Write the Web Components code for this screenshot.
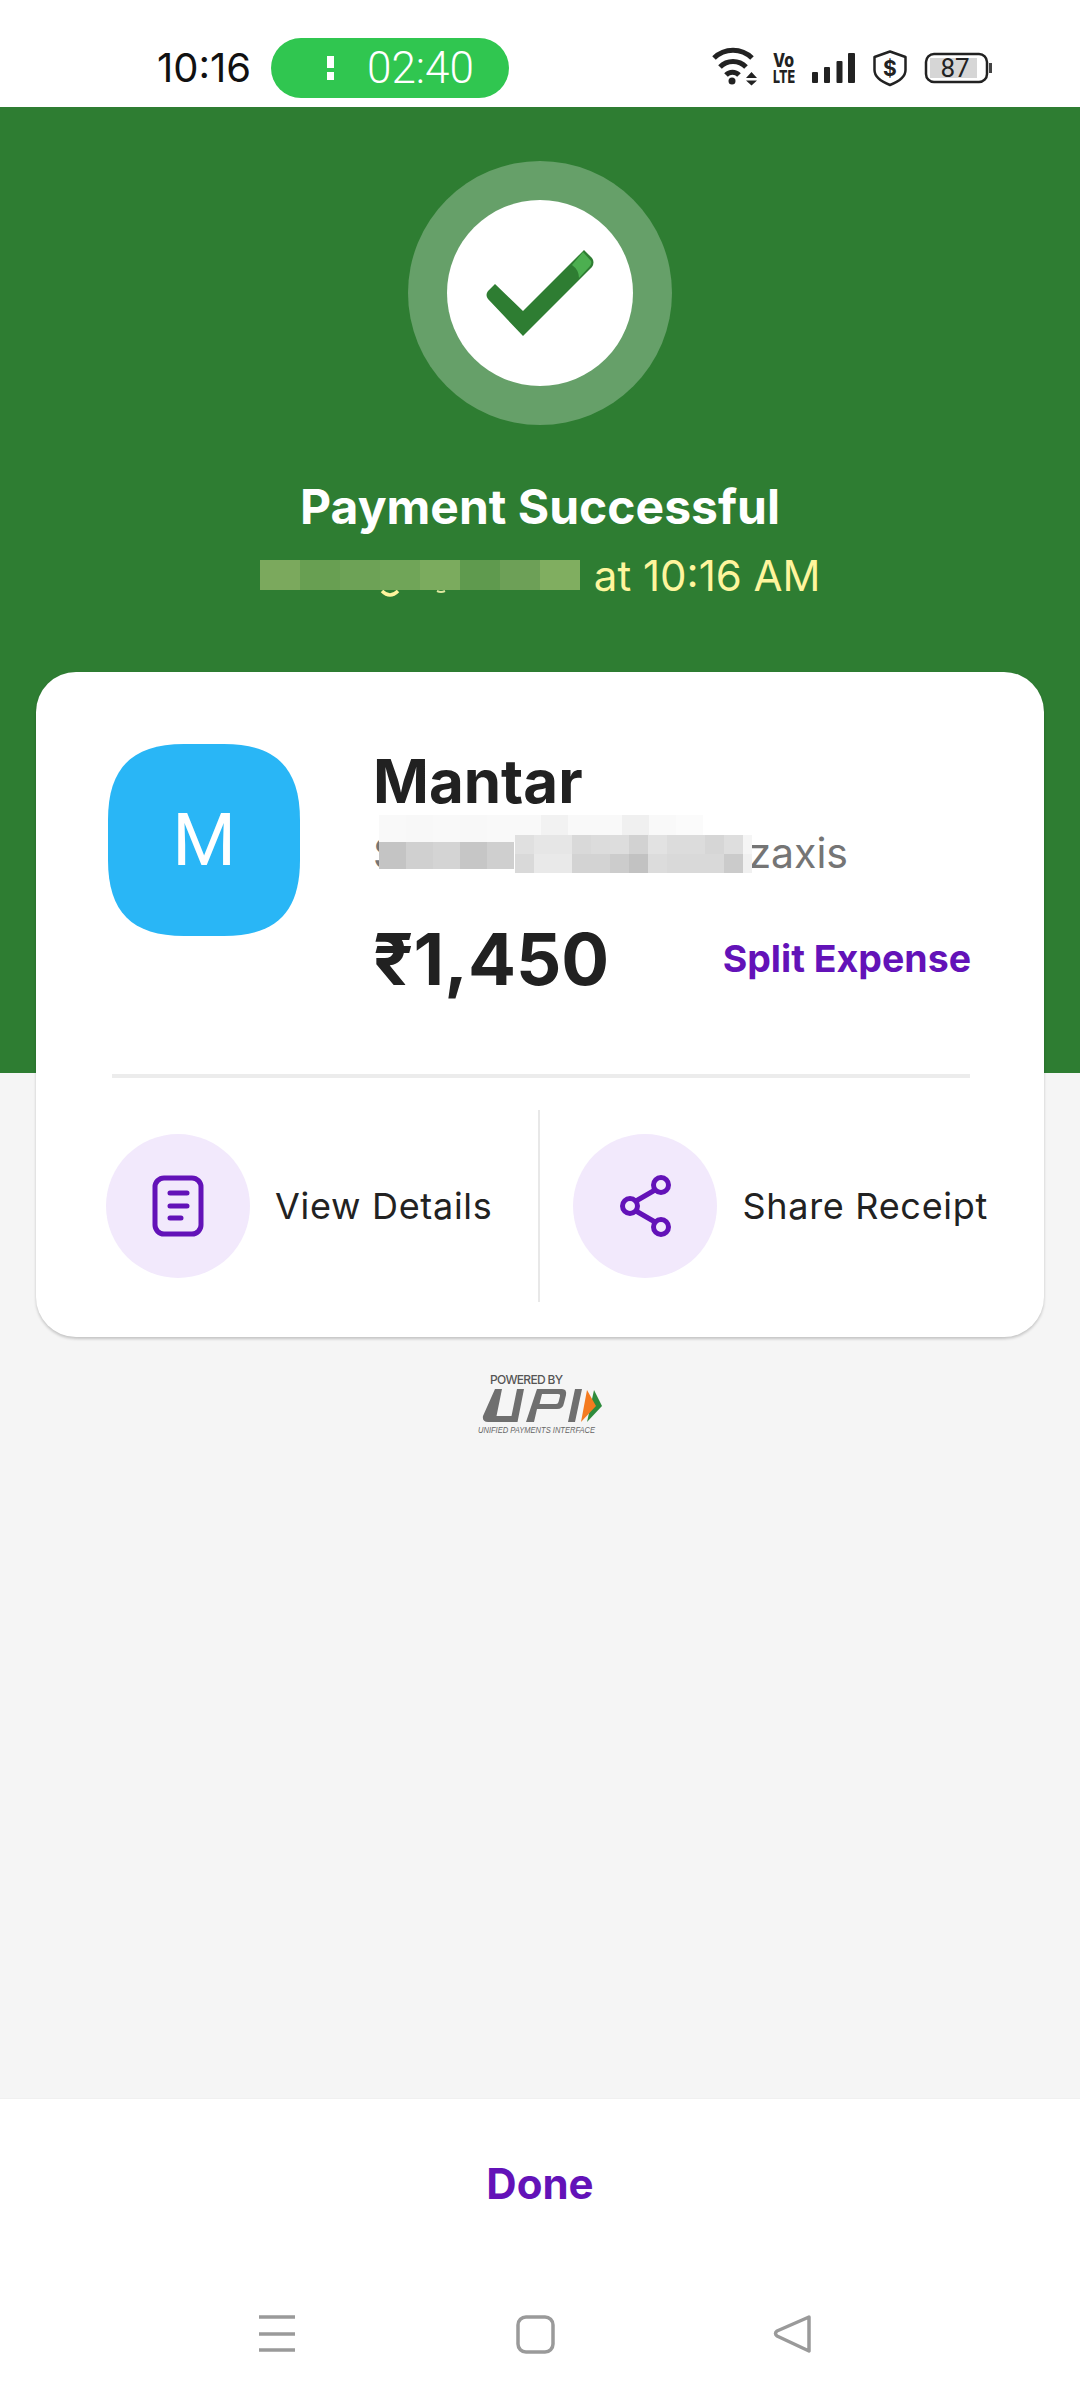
<!DOCTYPE html>
<html>
<head>
<meta charset="utf-8">
<style>
html, body { margin: 0; padding: 0; background: #f5f5f5; }
body { font-family: Inter, "Noto Sans", sans-serif; }
</style>
</head>
<body>
<payment-screen>
	<status-bar></status-bar>
	<payment-hero></payment-hero>
	<receipt-card></receipt-card>
	<upi-logo></upi-logo>
	<done-bar></done-bar>
	<nav-bar></nav-bar>
</payment-screen>
<script>
const define = (name, html) => {
	const template = document.createElement('template');
	template.innerHTML = html;
	customElements.define(name, class extends HTMLElement {
		connectedCallback() {
			if (this.shadowRoot) {
				return;
			}
			this.attachShadow({ mode: 'open' }).appendChild(template.content.cloneNode(true));
		}
	});
};

// blurred-out patch: rows split by |, cells by spaces
class PixelMosaic extends HTMLElement {
	connectedCallback() {
		if (this.shadowRoot) {
			return;
		}
		const cellWidth = this.getAttribute('cell-width');
		const cellHeight = this.getAttribute('cell-height');
		const rows = this.getAttribute('rows').split('|').map((row) => {
			const cells = row.trim().split(' ').map((c) => `<b style="background:#${c}"></b>`).join('');
			return `<div>${cells}</div>`;
		}).join('');
		this.attachShadow({ mode: 'open' }).innerHTML = `
<style>
:host { display: block; position: absolute; overflow: hidden; }
div { display: flex; height: ${cellHeight}px; }
b { display: block; flex: none; width: ${cellWidth}px; }
</style>
${rows}`;
	}
}
customElements.define('pixel-mosaic', PixelMosaic);

define('payment-screen', `
<style>
:host { display: flex; flex-direction: column; width: 1080px; height: 2400px; background: #f5f5f5; overflow: hidden; }
</style>
<slot></slot>
`);

define('status-bar', `
<style>
:host { display: flex; align-items: center; height: 107px; background: #fff; box-sizing: border-box; padding: 28px 0 0 157px; flex: none; }
.time { font: 400 40px Inter, sans-serif; color: #111; width: 114px; }
.call { display: flex; align-items: center; width: 238px; height: 60px; border-radius: 30px; background: #30c650; color: #fff; font: 300 44px Roboto, sans-serif; box-sizing: border-box; padding-left: 56px; }
.call i { display: block; width: 7px; height: 24px; margin-right: 33px; background: linear-gradient(#fff 0 12px, transparent 12px 16px, #fff 16px); }
svg { display: block; margin-left: 191px; }
</style>
<span class="time">10:16</span>
<span class="call"><i></i>02:40</span>
<svg width="300" height="55" viewBox="0 0 300 55">
	<g fill="none" stroke="#222" stroke-width="5">
		<path d="M14 18 A27 27 0 0 1 52 18"/>
		<path d="M20 27 A18 18 0 0 1 46 27"/>
		<path d="M26 35 A9 9 0 0 1 39 35"/>
	</g>
	<circle cx="32" cy="41" r="3.500" fill="#222"/>
	<path d="M46 38h11l-5.500 -6zM46 40.500h11l-5.500 5z" fill="#222"/>
	<text font-family="Inter, sans-serif" font-weight="800" fill="#222"><tspan x="73" y="27" font-size="19" textLength="21" lengthAdjust="spacingAndGlyphs">Vo</tspan><tspan x="73" y="43" font-size="18" textLength="22" lengthAdjust="spacingAndGlyphs">LTE</tspan></text>
	<g fill="#222">
		<rect x="112" y="32" width="6" height="11" rx="1"/>
		<rect x="124" y="27" width="6" height="16" rx="1"/>
		<rect x="136.500" y="21" width="6" height="22" rx="1"/>
		<rect x="148" y="13" width="7" height="30" rx="1"/>
	</g>
	<path d="M190 11.500 L205.500 17 V30 C205.500 37 199 41.500 190 45 C181 41.500 174.500 37 174.500 30 V17 Z" fill="none" stroke="#222" stroke-width="2.500" stroke-linejoin="round"/>
	<text x="190" y="36" text-anchor="middle" font-family="Inter, sans-serif" font-weight="700" font-size="21" fill="#222">$</text>
	<rect x="226" y="14" width="61" height="28" rx="8" fill="none" stroke="#222" stroke-width="2.500"/>
	<rect x="230" y="18" width="47" height="20" fill="#d6d6d6"/>
	<text x="255" y="37" text-anchor="middle" font-family="Roboto, sans-serif" font-size="26" fill="#222">87</text>
	<rect x="289" y="23" width="3" height="10" fill="#444"/>
</svg>
`);

define('payment-hero', `
<style>
:host { display: flex; flex-direction: column; align-items: center; height: 966px; background: #2e7d32; box-sizing: border-box; padding-top: 54px; flex: none; }
.ring { width: 264px; height: 264px; border-radius: 50%; background: #66a069; display: flex; align-items: center; justify-content: center; }
.disc { width: 186px; height: 186px; border-radius: 50%; background: #fff; }
.disc svg { display: block; }
h1 { margin: 52px 0 0; font: 700 48px/60px Inter, sans-serif; color: #fff; }
.sub { position: relative; margin: 14px 0 0; font: 400 42px/50px Inter, sans-serif; color: #fff59d; width: 561px; height: 50px; text-align: right; }
pixel-mosaic { left: 0; top: 9px; width: 320px; height: 30px; }
.tail { position: absolute; left: 118px; top: 39px; display: block; }
</style>
<div class="ring">
	<div class="disc">
		<svg width="186" height="186" viewBox="0 0 186 186">
			<path d="M48 84 L76 111 L137 50 L145 58 Q148 62 145 67 L76 136 L41 99 Q38 95 41 91 Z" fill="#2e7d32"/>
			<path d="M125 65 L136 52 L144 61 Q145 63 143 66 L132 78 Q132 70 125 65 Z" fill="#4caf50"/>
		</svg>
	</div>
</div>
<h1>Payment Successful</h1>
<div class="sub">
	<span>at 10:16 AM</span>
	<svg class="tail" width="70" height="10" viewBox="0 0 70 10" fill="none" stroke-width="3.500">
		<path d="M4 1 Q12 9 20 1" stroke="#fff59d"/>
		<path d="M59 1 Q63 3 67 1" stroke="#dfe8a0" stroke-width="2"/>
	</svg>
	<pixel-mosaic cell-width="40" cell-height="30" rows="7ba95d 689f52 6da256 70a558 7bab5e 5f9a4e 6da057 80ae60"></pixel-mosaic>
</div>
`);

define('action-item', `
<style>
:host { display: flex; align-items: center; gap: 25px; font: 400 36px Inter, sans-serif; letter-spacing: .7px; color: #222; }
.icon { width: 144px; height: 144px; border-radius: 50%; background: #f2e9fc; display: flex; align-items: center; justify-content: center; flex: none; }
</style>
<div class="icon"><slot name="icon"></slot></div>
<slot></slot>
`);

define('receipt-card', `
<style>
:host { display: block; position: relative; flex: none; margin: -401px 36px 0; height: 665px; border-radius: 40px; background: #fff; box-shadow: 0 2px 3px rgba(0,0,0,.2); box-sizing: border-box; padding: 72px 0 0; }
.top { display: flex; padding: 0 0 0 72px; height: 330px; }
.avatar { flex: none; width: 192px; height: 192px; background: #29b6f6; display: flex; align-items: center; justify-content: center; color: #fff; font: 400 73px Roboto, sans-serif; clip-path: path("M76 0H116C168 0 192 24 192 76V116C192 168 168 192 116 192H76C24 192 0 168 0 116V76C0 24 24 0 76 0Z"); }
.info { margin-left: 73px; width: 600px; }
.name { font: 700 60px/68px Inter, sans-serif; color: #212121; margin-top: 3px; }
.vpa { display: flex; justify-content: space-between; font: 400 41px/50px Inter, sans-serif; color: #757575; height: 50px; margin-top: 13px; width: 475px; }
.amount-row { display: flex; align-items: center; justify-content: space-between; margin-top: 39px; width: 598px; }
.amount { font: 700 71px/84px Inter, "Noto Sans", sans-serif; color: #212121; }
.split { font: 700 37.500px Inter, sans-serif; color: #6312b8; margin-top: -2px; }
.rule { height: 4px; background: #ececec; margin: 0 74px 0 76px; }
.actions { display: flex; height: 192px; margin-top: 32px; align-items: center; padding-left: 70px; }
.gap { width: 2px; height: 192px; background: #e8e8e8; margin: 0 33px 0 46px; flex: none; }
.mosaic-a { left: 343px; top: 143px; width: 325px; height: 54px; }
.mosaic-b { left: 479px; top: 163px; width: 237px; height: 38px; }
</style>
<div class="top">
	<div class="avatar">M</div>
	<div class="info">
		<div class="name">Mantar</div>
		<div class="vpa">
			<span>S</span>
			<span>zaxis</span>
		</div>
		<div class="amount-row">
			<span class="amount">₹1,450</span>
			<span class="split">Split Expense</span>
		</div>
	</div>
</div>
<div class="rule"></div>
<div class="actions">
	<action-item>
		<svg slot="icon" width="54" height="64" viewBox="0 0 54 64" fill="none" stroke="#6312b8" stroke-width="5" stroke-linecap="round">
			<rect x="4" y="4" width="46" height="56" rx="9"/>
			<path d="M19 19h17M19 32h17M19 44h11"/>
		</svg>
		View Details
	</action-item>
	<div class="gap"></div>
	<action-item>
		<svg slot="icon" width="54" height="64" viewBox="0 0 54 64" fill="none" stroke="#6312b8" stroke-width="5">
			<circle cx="43" cy="11" r="7.500"/><circle cx="12" cy="32" r="7.500"/><circle cx="43" cy="53" r="7.500"/>
			<path d="M37 16 L18 27M18 37 L37 48"/>
		</svg>
		Share Receipt
	</action-item>
</div>
<pixel-mosaic class="mosaic-a" cell-width="27" cell-height="27" rows="f9f9f9 f8f8f8 f9f9f9 f8f8f8 f9f9f9 f9f9f9 f2f2f2 f9f9f9 f9f9f9 f0f0f0 f9f9f9 fbfbfb|c4c4c4 d0d0d0 d4d4d4 c6c6c6 cfcfcf"></pixel-mosaic>
<pixel-mosaic class="mosaic-b" cell-width="19" cell-height="19" rows="e0e0e0 e6e6e6 e6e6e6 d9d9d9 dcdcdc dddddd d2d2d2 e2e2e2 dcdcdc dcdcdc d6d6d6 dedede f5f5f5|d9d9d9 e9e9e9 e9e9e9 d3d3d3 d3d3d3 cccccc c2c2c2 dcdcdc d9d9d9 d9d9d9 d9d9d9 cbcbcb f0f0f0"></pixel-mosaic>
`);

define('upi-logo', `
<style>
:host { display: block; flex: none; width: 160px; margin: 32px 0 0 477px; height: 70px; }
svg { display: block; }
</style>
<svg width="160" height="70" viewBox="0 0 160 70">
	<text x="13" y="15" font-family="Inter, sans-serif" font-size="12" font-weight="500" fill="#555" textLength="73">POWERED BY</text>
	<path d="M18 20h7L19.500 47h15L40 20h7L40.500 53H11Q5 53 6 47Z" fill="#6f6f6f"/>
	<path fill-rule="evenodd" d="M60 20H85Q90 20 89 26L87 34Q86 40 80 40H60L57 53H49ZM65 25L62.500 35H79Q81 35 81.500 33L83 27Q83.500 25 81 25Z" fill="#6f6f6f"/>
	<path d="M98 20h7L98 53H91Z" fill="#6f6f6f"/>
	<path d="M117 21L125 37L110 53Z" fill="#2e8b3c"/>
	<path d="M110 21L119 37L104 53Z" fill="#f47b20"/>
	<text x="1" y="64" font-family="'Liberation Sans', sans-serif" font-size="8.500" font-style="italic" fill="#666" textLength="117" lengthAdjust="spacingAndGlyphs">UNIFIED PAYMENTS INTERFACE</text>
</svg>
`);

define('done-bar', `
<style>
:host { display: flex; flex: none; height: 170px; margin-top: auto; background: #fff; align-items: center; justify-content: center; font: 700 42px Inter, sans-serif; color: #6312b8; box-sizing: border-box; border-top: 1px solid #f0f0f0; }
</style>
Done
`);

define('nav-bar', `
<style>
:host { display: block; flex: none; height: 132px; background: #fff; }
svg { display: block; }
</style>
<svg width="1080" height="132" viewBox="0 0 1080 132" fill="none" stroke="#9a9a9a" stroke-width="3.500" stroke-linejoin="round">
	<path d="M259 49h36M259 66h36M259 82h36"/>
	<rect x="518" y="49" width="35" height="35" rx="8"/>
	<path d="M809 49 L777 63 Q774 65.500 777 68 L809 83 Z"/>
</svg>
`);
</script>
</body>
</html>
